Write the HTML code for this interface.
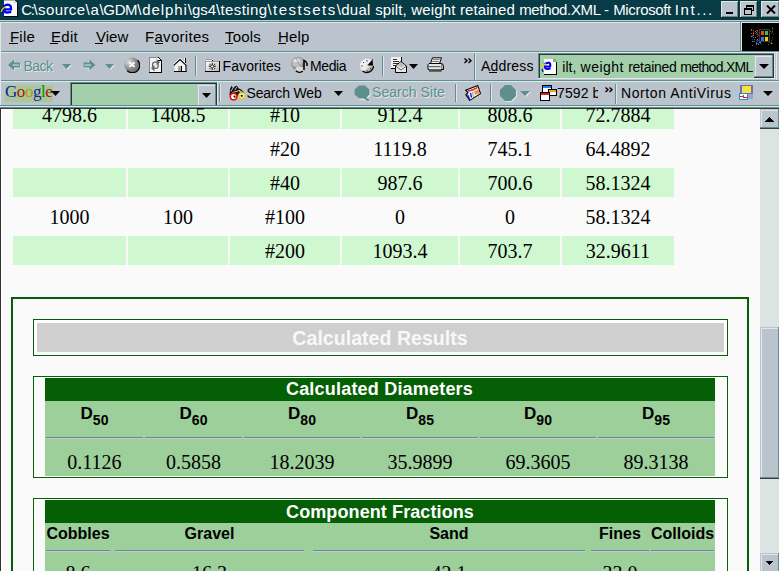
<!DOCTYPE html>
<html><head><meta charset="utf-8"><style>
html,body{margin:0;padding:0;}
body{width:779px;height:571px;overflow:hidden;position:relative;background:#fafafa;}
body>div,body>svg{position:absolute;}
</style></head><body>
<div style="left:0px;top:0px;width:779px;height:109px;background:#bbc4cc;"></div>
<div style="left:0px;top:0px;width:779px;height:20px;background:#073b45;"></div>
<div style="left:0px;top:20px;width:779px;height:1px;background:#c3cbd3;"></div>
<div style="left:0px;top:21px;width:779px;height:1px;background:#5f8f8f;"></div>
<div style="left:0px;top:22px;width:779px;height:1px;background:#dfe8e8;"></div>
<div style="left:0px;top:51px;width:779px;height:1px;background:#5f8f8f;"></div>
<div style="left:0px;top:52px;width:779px;height:1px;background:#dfe8e8;"></div>
<div style="left:0px;top:80px;width:779px;height:1px;background:#5f8f8f;"></div>
<div style="left:0px;top:81px;width:779px;height:1px;background:#dfe8e8;"></div>
<div style="left:0px;top:105px;width:779px;height:1px;background:#5f8f8f;"></div>
<div style="left:0px;top:106px;width:779px;height:1px;background:#dfe8e8;"></div>
<div style="left:0px;top:107px;width:779px;height:1px;background:#5f8f8f;"></div>
<div style="left:0px;top:108px;width:779px;height:1px;background:#3a3f40;"></div>
<div style="left:0px;top:22px;width:1px;height:83px;background:#dfe8e8;"></div>
<div style="left:0px;top:109px;width:760px;height:462px;background:#fafafa;"></div>
<div style="left:0px;top:109px;width:1px;height:462px;background:#333;"></div>
<div style="left:1px;top:109px;width:1px;height:462px;background:#fff;"></div>
<div style="left:13px;top:109px;width:113px;height:20px;background:#d0f8d0;"></div>
<div style="left:128px;top:109px;width:100px;height:20px;background:#d0f8d0;"></div>
<div style="left:230px;top:109px;width:110px;height:20px;background:#d0f8d0;"></div>
<div style="left:342px;top:109px;width:116px;height:20px;background:#d0f8d0;"></div>
<div style="left:460px;top:109px;width:100px;height:20px;background:#d0f8d0;"></div>
<div style="left:562px;top:109px;width:112px;height:20px;background:#d0f8d0;"></div>
<div style="left:13px;top:168px;width:113px;height:29px;background:#d0f8d0;"></div>
<div style="left:128px;top:168px;width:100px;height:29px;background:#d0f8d0;"></div>
<div style="left:230px;top:168px;width:110px;height:29px;background:#d0f8d0;"></div>
<div style="left:342px;top:168px;width:116px;height:29px;background:#d0f8d0;"></div>
<div style="left:460px;top:168px;width:100px;height:29px;background:#d0f8d0;"></div>
<div style="left:562px;top:168px;width:112px;height:29px;background:#d0f8d0;"></div>
<div style="left:13px;top:236px;width:113px;height:29px;background:#d0f8d0;"></div>
<div style="left:128px;top:236px;width:100px;height:29px;background:#d0f8d0;"></div>
<div style="left:230px;top:236px;width:110px;height:29px;background:#d0f8d0;"></div>
<div style="left:342px;top:236px;width:116px;height:29px;background:#d0f8d0;"></div>
<div style="left:460px;top:236px;width:100px;height:29px;background:#d0f8d0;"></div>
<div style="left:562px;top:236px;width:112px;height:29px;background:#d0f8d0;"></div>
<div style="left:-130.5px;width:400px;text-align:center;top:105.25px;font:normal 20px/20px 'Liberation Serif',serif;color:#000;letter-spacing:0px;white-space:nowrap;">4798.6</div>
<div style="left:-22.0px;width:400px;text-align:center;top:105.25px;font:normal 20px/20px 'Liberation Serif',serif;color:#000;letter-spacing:0px;white-space:nowrap;">1408.5</div>
<div style="left:85.0px;width:400px;text-align:center;top:105.25px;font:normal 20px/20px 'Liberation Serif',serif;color:#000;letter-spacing:0px;white-space:nowrap;">#10</div>
<div style="left:200.0px;width:400px;text-align:center;top:105.25px;font:normal 20px/20px 'Liberation Serif',serif;color:#000;letter-spacing:0px;white-space:nowrap;">912.4</div>
<div style="left:310.0px;width:400px;text-align:center;top:105.25px;font:normal 20px/20px 'Liberation Serif',serif;color:#000;letter-spacing:0px;white-space:nowrap;">808.6</div>
<div style="left:418.0px;width:400px;text-align:center;top:105.25px;font:normal 20px/20px 'Liberation Serif',serif;color:#000;letter-spacing:0px;white-space:nowrap;">72.7884</div>
<div style="left:85.0px;width:400px;text-align:center;top:139.25px;font:normal 20px/20px 'Liberation Serif',serif;color:#000;letter-spacing:0px;white-space:nowrap;">#20</div>
<div style="left:200.0px;width:400px;text-align:center;top:139.25px;font:normal 20px/20px 'Liberation Serif',serif;color:#000;letter-spacing:0px;white-space:nowrap;">1119.8</div>
<div style="left:310.0px;width:400px;text-align:center;top:139.25px;font:normal 20px/20px 'Liberation Serif',serif;color:#000;letter-spacing:0px;white-space:nowrap;">745.1</div>
<div style="left:418.0px;width:400px;text-align:center;top:139.25px;font:normal 20px/20px 'Liberation Serif',serif;color:#000;letter-spacing:0px;white-space:nowrap;">64.4892</div>
<div style="left:85.0px;width:400px;text-align:center;top:173.25px;font:normal 20px/20px 'Liberation Serif',serif;color:#000;letter-spacing:0px;white-space:nowrap;">#40</div>
<div style="left:200.0px;width:400px;text-align:center;top:173.25px;font:normal 20px/20px 'Liberation Serif',serif;color:#000;letter-spacing:0px;white-space:nowrap;">987.6</div>
<div style="left:310.0px;width:400px;text-align:center;top:173.25px;font:normal 20px/20px 'Liberation Serif',serif;color:#000;letter-spacing:0px;white-space:nowrap;">700.6</div>
<div style="left:418.0px;width:400px;text-align:center;top:173.25px;font:normal 20px/20px 'Liberation Serif',serif;color:#000;letter-spacing:0px;white-space:nowrap;">58.1324</div>
<div style="left:-130.5px;width:400px;text-align:center;top:207.25px;font:normal 20px/20px 'Liberation Serif',serif;color:#000;letter-spacing:0px;white-space:nowrap;">1000</div>
<div style="left:-22.0px;width:400px;text-align:center;top:207.25px;font:normal 20px/20px 'Liberation Serif',serif;color:#000;letter-spacing:0px;white-space:nowrap;">100</div>
<div style="left:85.0px;width:400px;text-align:center;top:207.25px;font:normal 20px/20px 'Liberation Serif',serif;color:#000;letter-spacing:0px;white-space:nowrap;">#100</div>
<div style="left:200.0px;width:400px;text-align:center;top:207.25px;font:normal 20px/20px 'Liberation Serif',serif;color:#000;letter-spacing:0px;white-space:nowrap;">0</div>
<div style="left:310.0px;width:400px;text-align:center;top:207.25px;font:normal 20px/20px 'Liberation Serif',serif;color:#000;letter-spacing:0px;white-space:nowrap;">0</div>
<div style="left:418.0px;width:400px;text-align:center;top:207.25px;font:normal 20px/20px 'Liberation Serif',serif;color:#000;letter-spacing:0px;white-space:nowrap;">58.1324</div>
<div style="left:85.0px;width:400px;text-align:center;top:241.25px;font:normal 20px/20px 'Liberation Serif',serif;color:#000;letter-spacing:0px;white-space:nowrap;">#200</div>
<div style="left:200.0px;width:400px;text-align:center;top:241.25px;font:normal 20px/20px 'Liberation Serif',serif;color:#000;letter-spacing:0px;white-space:nowrap;">1093.4</div>
<div style="left:310.0px;width:400px;text-align:center;top:241.25px;font:normal 20px/20px 'Liberation Serif',serif;color:#000;letter-spacing:0px;white-space:nowrap;">703.7</div>
<div style="left:418.0px;width:400px;text-align:center;top:241.25px;font:normal 20px/20px 'Liberation Serif',serif;color:#000;letter-spacing:0px;white-space:nowrap;">32.9611</div>
<div style="left:11px;top:297px;width:738px;height:2px;background:#056005;"></div>
<div style="left:11px;top:297px;width:2px;height:274px;background:#056005;"></div>
<div style="left:747px;top:297px;width:2px;height:274px;background:#056005;"></div>
<div style="left:33px;top:319px;width:695px;height:1px;background:#056005;"></div>
<div style="left:33px;top:355px;width:695px;height:1px;background:#056005;"></div>
<div style="left:33px;top:319px;width:1px;height:37px;background:#056005;"></div>
<div style="left:727px;top:319px;width:1px;height:37px;background:#056005;"></div>
<div style="left:34px;top:320px;width:693px;height:35px;background:#fff;"></div>
<div style="left:37px;top:323px;width:687px;height:29px;background:#cfcfcf;"></div>
<div style="left:180.0px;width:400px;text-align:center;top:329.41px;font:bold 19.6px/19.6px 'Liberation Sans',sans-serif;color:#f8f8f8;letter-spacing:0px;white-space:nowrap;">Calculated Results</div>
<div style="left:33px;top:376px;width:695px;height:1px;background:#056005;"></div>
<div style="left:33px;top:477px;width:695px;height:1px;background:#056005;"></div>
<div style="left:33px;top:376px;width:1px;height:102px;background:#056005;"></div>
<div style="left:727px;top:376px;width:1px;height:102px;background:#056005;"></div>
<div style="left:34px;top:377px;width:693px;height:100px;background:#fff;"></div>
<div style="left:35px;top:378px;width:691px;height:98px;background:#fafafa;"></div>
<div style="left:45px;top:378px;width:670px;height:23px;background:#056005;"></div>
<div style="left:45px;top:401px;width:670px;height:75px;background:#9ccf9a;"></div>
<div style="left:179.5px;width:400px;text-align:center;top:380.36px;font:bold 18px/18px 'Liberation Sans',sans-serif;color:#fff;letter-spacing:0.2px;white-space:nowrap;">Calculated Diameters</div>
<div style="left:46px;top:437px;width:97px;height:1px;background:#5f8f8f;"></div>
<div style="left:46px;top:438px;width:97px;height:1px;background:#c8c8d8;"></div>
<div style="left:34.5px;width:120px;text-align:center;top:404.61px;font:bold 17px/17px 'Liberation Sans',sans-serif;color:#000;white-space:nowrap">D<span style="font-size:14px;position:relative;top:6px">50</span></div>
<div style="left:-105.5px;width:400px;text-align:center;top:452.25px;font:normal 20px/20px 'Liberation Serif',serif;color:#000;letter-spacing:0px;white-space:nowrap;">0.1126</div>
<div style="left:145px;top:437px;width:97px;height:1px;background:#5f8f8f;"></div>
<div style="left:145px;top:438px;width:97px;height:1px;background:#c8c8d8;"></div>
<div style="left:133.5px;width:120px;text-align:center;top:404.61px;font:bold 17px/17px 'Liberation Sans',sans-serif;color:#000;white-space:nowrap">D<span style="font-size:14px;position:relative;top:6px">60</span></div>
<div style="left:-6.5px;width:400px;text-align:center;top:452.25px;font:normal 20px/20px 'Liberation Serif',serif;color:#000;letter-spacing:0px;white-space:nowrap;">0.5858</div>
<div style="left:244px;top:437px;width:116px;height:1px;background:#5f8f8f;"></div>
<div style="left:244px;top:438px;width:116px;height:1px;background:#c8c8d8;"></div>
<div style="left:242.0px;width:120px;text-align:center;top:404.61px;font:bold 17px/17px 'Liberation Sans',sans-serif;color:#000;white-space:nowrap">D<span style="font-size:14px;position:relative;top:6px">80</span></div>
<div style="left:102.0px;width:400px;text-align:center;top:452.25px;font:normal 20px/20px 'Liberation Serif',serif;color:#000;letter-spacing:0px;white-space:nowrap;">18.2039</div>
<div style="left:362px;top:437px;width:116px;height:1px;background:#5f8f8f;"></div>
<div style="left:362px;top:438px;width:116px;height:1px;background:#c8c8d8;"></div>
<div style="left:360.0px;width:120px;text-align:center;top:404.61px;font:bold 17px/17px 'Liberation Sans',sans-serif;color:#000;white-space:nowrap">D<span style="font-size:14px;position:relative;top:6px">85</span></div>
<div style="left:220.0px;width:400px;text-align:center;top:452.25px;font:normal 20px/20px 'Liberation Serif',serif;color:#000;letter-spacing:0px;white-space:nowrap;">35.9899</div>
<div style="left:480px;top:437px;width:116px;height:1px;background:#5f8f8f;"></div>
<div style="left:480px;top:438px;width:116px;height:1px;background:#c8c8d8;"></div>
<div style="left:478.0px;width:120px;text-align:center;top:404.61px;font:bold 17px/17px 'Liberation Sans',sans-serif;color:#000;white-space:nowrap">D<span style="font-size:14px;position:relative;top:6px">90</span></div>
<div style="left:338.0px;width:400px;text-align:center;top:452.25px;font:normal 20px/20px 'Liberation Serif',serif;color:#000;letter-spacing:0px;white-space:nowrap;">69.3605</div>
<div style="left:598px;top:437px;width:116px;height:1px;background:#5f8f8f;"></div>
<div style="left:598px;top:438px;width:116px;height:1px;background:#c8c8d8;"></div>
<div style="left:596.0px;width:120px;text-align:center;top:404.61px;font:bold 17px/17px 'Liberation Sans',sans-serif;color:#000;white-space:nowrap">D<span style="font-size:14px;position:relative;top:6px">95</span></div>
<div style="left:456.0px;width:400px;text-align:center;top:452.25px;font:normal 20px/20px 'Liberation Serif',serif;color:#000;letter-spacing:0px;white-space:nowrap;">89.3138</div>
<div style="left:33px;top:498px;width:695px;height:1px;background:#056005;"></div>
<div style="left:33px;top:498px;width:1px;height:73px;background:#056005;"></div>
<div style="left:727px;top:498px;width:1px;height:73px;background:#056005;"></div>
<div style="left:34px;top:499px;width:693px;height:72px;background:#fff;"></div>
<div style="left:35px;top:500px;width:691px;height:71px;background:#fafafa;"></div>
<div style="left:45px;top:500px;width:670px;height:23px;background:#056005;"></div>
<div style="left:45px;top:523px;width:670px;height:48px;background:#9ccf9a;"></div>
<div style="left:180.0px;width:400px;text-align:center;top:502.76px;font:bold 18px/18px 'Liberation Sans',sans-serif;color:#fff;letter-spacing:0.1px;white-space:nowrap;">Component Fractions</div>
<div style="left:46px;top:550px;width:64px;height:1px;background:#5f8f8f;"></div>
<div style="left:46px;top:551px;width:64px;height:1px;background:#c8c8d8;"></div>
<div style="left:-122.0px;width:400px;text-align:center;top:526.46px;font:bold 16px/16px 'Liberation Sans',sans-serif;color:#000;letter-spacing:0px;white-space:nowrap;">Cobbles</div>
<div style="left:-122.0px;width:400px;text-align:center;top:563.25px;font:normal 20px/20px 'Liberation Serif',serif;color:#000;letter-spacing:0px;white-space:nowrap;">8.6</div>
<div style="left:115px;top:550px;width:189px;height:1px;background:#5f8f8f;"></div>
<div style="left:115px;top:551px;width:189px;height:1px;background:#c8c8d8;"></div>
<div style="left:9.5px;width:400px;text-align:center;top:526.46px;font:bold 16px/16px 'Liberation Sans',sans-serif;color:#000;letter-spacing:0px;white-space:nowrap;">Gravel</div>
<div style="left:9.5px;width:400px;text-align:center;top:563.25px;font:normal 20px/20px 'Liberation Serif',serif;color:#000;letter-spacing:0px;white-space:nowrap;">16.3</div>
<div style="left:313px;top:550px;width:272px;height:1px;background:#5f8f8f;"></div>
<div style="left:313px;top:551px;width:272px;height:1px;background:#c8c8d8;"></div>
<div style="left:249.0px;width:400px;text-align:center;top:526.46px;font:bold 16px/16px 'Liberation Sans',sans-serif;color:#000;letter-spacing:0px;white-space:nowrap;">Sand</div>
<div style="left:249.0px;width:400px;text-align:center;top:563.25px;font:normal 20px/20px 'Liberation Serif',serif;color:#000;letter-spacing:0px;white-space:nowrap;">42.1</div>
<div style="left:591px;top:550px;width:58px;height:1px;background:#5f8f8f;"></div>
<div style="left:591px;top:551px;width:58px;height:1px;background:#c8c8d8;"></div>
<div style="left:420.0px;width:400px;text-align:center;top:526.46px;font:bold 16px/16px 'Liberation Sans',sans-serif;color:#000;letter-spacing:0px;white-space:nowrap;">Fines</div>
<div style="left:420.0px;width:400px;text-align:center;top:563.25px;font:normal 20px/20px 'Liberation Serif',serif;color:#000;letter-spacing:0px;white-space:nowrap;">33.0</div>
<div style="left:651px;top:550px;width:63px;height:1px;background:#5f8f8f;"></div>
<div style="left:651px;top:551px;width:63px;height:1px;background:#c8c8d8;"></div>
<div style="left:482.5px;width:400px;text-align:center;top:526.46px;font:bold 16px/16px 'Liberation Sans',sans-serif;color:#000;letter-spacing:0px;white-space:nowrap;">Colloids</div>
<div style="left:760px;top:109px;width:19px;height:462px;background:#dce3e3;"></div>
<div style="left:760px;top:109px;width:20px;height:20px;background:#bbc4cc;"></div>
<div style="left:761px;top:110px;width:18px;height:1px;background:#dfe8e8;"></div>
<div style="left:761px;top:110px;width:1px;height:18px;background:#dfe8e8;"></div>
<div style="left:760px;top:127px;width:20px;height:1px;background:#5f8f8f;"></div>
<div style="left:778px;top:109px;width:1px;height:19px;background:#5f8f8f;"></div>
<div style="left:760px;top:128px;width:20px;height:1px;background:#3a3f40;"></div>
<div style="left:779px;top:109px;width:1px;height:20px;background:#3a3f40;"></div>
<div style="left:760px;top:327px;width:20px;height:152px;background:#bbc4cc;"></div>
<div style="left:761px;top:328px;width:18px;height:1px;background:#dfe8e8;"></div>
<div style="left:761px;top:328px;width:1px;height:150px;background:#dfe8e8;"></div>
<div style="left:760px;top:477px;width:20px;height:1px;background:#5f8f8f;"></div>
<div style="left:778px;top:327px;width:1px;height:151px;background:#5f8f8f;"></div>
<div style="left:760px;top:478px;width:20px;height:1px;background:#3a3f40;"></div>
<div style="left:779px;top:327px;width:1px;height:152px;background:#3a3f40;"></div>
<div style="left:760px;top:553px;width:20px;height:20px;background:#bbc4cc;"></div>
<div style="left:761px;top:554px;width:18px;height:1px;background:#dfe8e8;"></div>
<div style="left:761px;top:554px;width:1px;height:18px;background:#dfe8e8;"></div>
<div style="left:760px;top:571px;width:20px;height:1px;background:#5f8f8f;"></div>
<div style="left:778px;top:553px;width:1px;height:19px;background:#5f8f8f;"></div>
<div style="left:760px;top:572px;width:20px;height:1px;background:#3a3f40;"></div>
<div style="left:779px;top:553px;width:1px;height:20px;background:#3a3f40;"></div>
<svg style="left:764px;top:116px" width="11" height="6" viewBox="0 0 11 6" shape-rendering="crispEdges"><polygon points="0.5,5.5 5,1 9.5,5.5" fill="#000"/></svg>
<svg style="left:764px;top:560px" width="11" height="6" viewBox="0 0 11 6" shape-rendering="crispEdges"><polygon points="0.5,0.5 5,5 9.5,0.5" fill="#000"/></svg>
<svg style="left:0px;top:0px" width="20" height="19" viewBox="0 0 20 19" shape-rendering="crispEdges"><rect x="4" y="0" width="13" height="16" fill="#f8f8f8"/><rect x="4" y="0" width="10" height="1" fill="#a8b0b0"/><polygon points="14,0 18,0 18,4" fill="#073b45"/><polygon points="14,0 17,3 14,3" fill="#d0d0d0"/><rect x="17" y="3" width="1" height="14" fill="#000"/><rect x="4" y="16" width="14" height="1" fill="#000"/></svg>
<svg style="left:0px;top:1px" width="14" height="15" viewBox="0 0 14 15"><path d="M4.2,8.3 H11 Q11.3,3.6 7.6,3.6 Q3.6,3.8 3.9,8.5 Q4.3,12 8.2,11.4 L11.2,10.8" fill="none" stroke="#0000f0" stroke-width="2.3"/><path d="M1.3,11 Q2,7.2 6.2,5.6" fill="none" stroke="#e0d000" stroke-width="1.3"/><path d="M2.6,10.5 L3.2,14.2" stroke="#0000f0" stroke-width="1.3"/></svg>
<div style="left:21.2px;top:2.30px;font:normal 15px/15px 'Liberation Sans',sans-serif;color:#fff;letter-spacing:-1.35px;white-space:nowrap;">C:</div>
<div style="left:33.5px;top:2.30px;font:normal 15px/15px 'Liberation Sans',sans-serif;color:#fff;letter-spacing:0.385px;white-space:nowrap;">\source</div>
<div style="left:85.4px;top:2.30px;font:normal 15px/15px 'Liberation Sans',sans-serif;color:#fff;letter-spacing:0.842px;white-space:nowrap;">\a</div>
<div style="left:99.60000000000001px;top:2.30px;font:normal 15px/15px 'Liberation Sans',sans-serif;color:#fff;letter-spacing:-0.393px;white-space:nowrap;">\GDM</div>
<div style="left:137.2px;top:2.30px;font:normal 15px/15px 'Liberation Sans',sans-serif;color:#fff;letter-spacing:0.914px;white-space:nowrap;">\delphi</div>
<div style="left:187.79999999999998px;top:2.30px;font:normal 15px/15px 'Liberation Sans',sans-serif;color:#fff;letter-spacing:-0.04px;white-space:nowrap;">\gs4</div>
<div style="left:216.0px;top:2.30px;font:normal 15px/15px 'Liberation Sans',sans-serif;color:#fff;letter-spacing:0.378px;white-space:nowrap;">\testing</div>
<div style="left:267.4px;top:2.30px;font:normal 15px/15px 'Liberation Sans',sans-serif;color:#fff;letter-spacing:1.492px;white-space:nowrap;">\testsets</div>
<div style="left:336.7px;top:2.30px;font:normal 15px/15px 'Liberation Sans',sans-serif;color:#fff;letter-spacing:0.299px;white-space:nowrap;">\dual&nbsp;</div>
<div style="left:375.2px;top:2.30px;font:normal 15px/15px 'Liberation Sans',sans-serif;color:#fff;letter-spacing:0.141px;white-space:nowrap;">spilt,&nbsp;</div>
<div style="left:411.2px;top:2.30px;font:normal 15px/15px 'Liberation Sans',sans-serif;color:#fff;letter-spacing:0.167px;white-space:nowrap;">weight&nbsp;</div>
<div style="left:459.9px;top:2.30px;font:normal 15px/15px 'Liberation Sans',sans-serif;color:#fff;letter-spacing:0.101px;white-space:nowrap;">retained&nbsp;</div>
<div style="left:519.2px;top:2.30px;font:normal 15px/15px 'Liberation Sans',sans-serif;color:#fff;letter-spacing:-0.352px;white-space:nowrap;">method.XML&nbsp;</div>
<div style="left:604.0px;top:2.30px;font:normal 15px/15px 'Liberation Sans',sans-serif;color:#fff;letter-spacing:0.014px;white-space:nowrap;">-&nbsp;</div>
<div style="left:613.2px;top:2.30px;font:normal 15px/15px 'Liberation Sans',sans-serif;color:#fff;letter-spacing:-0.343px;white-space:nowrap;">Microsoft&nbsp;</div>
<div style="left:674.8000000000001px;top:2.30px;font:normal 15px/15px 'Liberation Sans',sans-serif;color:#fff;letter-spacing:1.649px;white-space:nowrap;">Int...</div>
<div style="left:721px;top:1px;width:18px;height:17px;background:#bbc4cc;"></div>
<div style="left:721px;top:1px;width:17px;height:1px;background:#dfe8e8;"></div>
<div style="left:721px;top:1px;width:1px;height:16px;background:#dfe8e8;"></div>
<div style="left:722px;top:16px;width:16px;height:1px;background:#5f8f8f;"></div>
<div style="left:737px;top:2px;width:1px;height:15px;background:#5f8f8f;"></div>
<div style="left:721px;top:17px;width:18px;height:1px;background:#1a2a2a;"></div>
<div style="left:738px;top:1px;width:1px;height:17px;background:#1a2a2a;"></div>
<div style="left:740px;top:1px;width:18px;height:17px;background:#bbc4cc;"></div>
<div style="left:740px;top:1px;width:17px;height:1px;background:#dfe8e8;"></div>
<div style="left:740px;top:1px;width:1px;height:16px;background:#dfe8e8;"></div>
<div style="left:741px;top:16px;width:16px;height:1px;background:#5f8f8f;"></div>
<div style="left:756px;top:2px;width:1px;height:15px;background:#5f8f8f;"></div>
<div style="left:740px;top:17px;width:18px;height:1px;background:#1a2a2a;"></div>
<div style="left:757px;top:1px;width:1px;height:17px;background:#1a2a2a;"></div>
<div style="left:761px;top:1px;width:19px;height:17px;background:#bbc4cc;"></div>
<div style="left:761px;top:1px;width:18px;height:1px;background:#dfe8e8;"></div>
<div style="left:761px;top:1px;width:1px;height:16px;background:#dfe8e8;"></div>
<div style="left:762px;top:16px;width:17px;height:1px;background:#5f8f8f;"></div>
<div style="left:778px;top:2px;width:1px;height:15px;background:#5f8f8f;"></div>
<div style="left:761px;top:17px;width:19px;height:1px;background:#1a2a2a;"></div>
<div style="left:779px;top:1px;width:1px;height:17px;background:#1a2a2a;"></div>
<div style="left:726px;top:12px;width:7px;height:2px;background:#000;"></div>
<svg style="left:744px;top:5px" width="11" height="10" viewBox="0 0 11 10" shape-rendering="crispEdges"><rect x="2.5" y="0.5" width="7" height="5" fill="none" stroke="#000"/><rect x="2" y="0" width="8" height="2" fill="#000"/><rect x="0" y="3" width="8" height="7" fill="#bbc4cc"/><rect x="0.5" y="3.5" width="7" height="5.5" fill="none" stroke="#000"/><rect x="0" y="3" width="8" height="2" fill="#000"/></svg>
<svg style="left:766px;top:5px" width="10" height="9" viewBox="0 0 10 9"><path d="M1,0.5 L9,8.5 M9,0.5 L1,8.5" stroke="#000" stroke-width="2"/></svg>
<div style="left:10px;top:29.30px;font:normal 15px/15px 'Liberation Sans',sans-serif;color:#000;letter-spacing:0.2px;white-space:nowrap;">File</div>
<div style="left:51px;top:29.30px;font:normal 15px/15px 'Liberation Sans',sans-serif;color:#000;letter-spacing:0.3px;white-space:nowrap;">Edit</div>
<div style="left:96px;top:29.30px;font:normal 15px/15px 'Liberation Sans',sans-serif;color:#000;letter-spacing:0px;white-space:nowrap;">View</div>
<div style="left:145px;top:29.30px;font:normal 15px/15px 'Liberation Sans',sans-serif;color:#000;letter-spacing:0.3px;white-space:nowrap;">Favorites</div>
<div style="left:225px;top:29.30px;font:normal 15px/15px 'Liberation Sans',sans-serif;color:#000;letter-spacing:0.2px;white-space:nowrap;">Tools</div>
<div style="left:278px;top:29.30px;font:normal 15px/15px 'Liberation Sans',sans-serif;color:#000;letter-spacing:0.2px;white-space:nowrap;">Help</div>
<div style="left:9px;top:43px;width:9px;height:1px;background:#000;"></div>
<div style="left:50px;top:43px;width:8px;height:1px;background:#000;"></div>
<div style="left:95px;top:43px;width:8px;height:1px;background:#000;"></div>
<div style="left:155px;top:43px;width:8px;height:1px;background:#000;"></div>
<div style="left:225px;top:43px;width:8px;height:1px;background:#000;"></div>
<div style="left:278px;top:43px;width:8px;height:1px;background:#000;"></div>
<div style="left:740px;top:22px;width:1px;height:29px;background:#5f8f8f;"></div>
<div style="left:741px;top:22px;width:1px;height:29px;background:#dfe8e8;"></div>
<div style="left:742px;top:23px;width:37px;height:28px;background:#000;"></div>
<svg style="left:742px;top:23px" width="37" height="28" viewBox="0 0 37 28" shape-rendering="crispEdges"><rect x="11" y="10" width="1" height="1" fill="#c04040" opacity="0.86"/><rect x="13" y="10" width="1" height="1" fill="#a05030" opacity="0.41"/><rect x="17" y="8" width="1" height="1" fill="#f08060" opacity="0.50"/><rect x="15" y="10" width="1" height="1" fill="#a05030" opacity="0.64"/><rect x="15" y="7" width="1" height="1" fill="#f08060" opacity="0.83"/><rect x="14" y="11" width="1" height="1" fill="#e05050" opacity="0.48"/><rect x="18" y="6" width="1" height="1" fill="#e05050" opacity="0.81"/><rect x="11" y="10" width="1" height="1" fill="#f0a0a0" opacity="0.76"/><rect x="17" y="9" width="1" height="1" fill="#a05030" opacity="0.62"/><rect x="17" y="12" width="1" height="1" fill="#e05050" opacity="0.42"/><rect x="13" y="8" width="1" height="1" fill="#f0a0a0" opacity="0.79"/><rect x="17" y="9" width="1" height="1" fill="#f0a0a0" opacity="0.69"/><rect x="14" y="9" width="1" height="1" fill="#f08060" opacity="0.85"/><rect x="15" y="13" width="1" height="1" fill="#c04040" opacity="0.90"/><rect x="15" y="7" width="1" height="1" fill="#c04040" opacity="0.88"/><rect x="17" y="10" width="1" height="1" fill="#f08060" opacity="0.72"/><rect x="18" y="8" width="1" height="1" fill="#e05050" opacity="0.43"/><rect x="17" y="13" width="1" height="1" fill="#e05050" opacity="0.57"/><rect x="10" y="12" width="1" height="1" fill="#e05050" opacity="0.55"/><rect x="16" y="12" width="1" height="1" fill="#e05050" opacity="0.70"/><rect x="16" y="9" width="1" height="1" fill="#a05030" opacity="0.57"/><rect x="17" y="13" width="1" height="1" fill="#a05030" opacity="0.52"/><rect x="9" y="6" width="1" height="1" fill="#e05050" opacity="0.70"/><rect x="9" y="7" width="1" height="1" fill="#f0a0a0" opacity="0.55"/><rect x="11" y="11" width="1" height="1" fill="#c04040" opacity="0.56"/><rect x="18" y="12" width="1" height="1" fill="#f0a0a0" opacity="0.59"/><rect x="17" y="9" width="1" height="1" fill="#a05030" opacity="0.74"/><rect x="10" y="13" width="1" height="1" fill="#a05030" opacity="0.54"/><rect x="15" y="11" width="1" height="1" fill="#c04040" opacity="0.62"/><rect x="11" y="8" width="1" height="1" fill="#c04040" opacity="0.41"/><rect x="13" y="10" width="1" height="1" fill="#e05050" opacity="0.59"/><rect x="14" y="7" width="1" height="1" fill="#c04040" opacity="0.63"/><rect x="15" y="8" width="1" height="1" fill="#c04040" opacity="0.77"/><rect x="9" y="6" width="1" height="1" fill="#e05050" opacity="0.88"/><rect x="11" y="9" width="1" height="1" fill="#a05030" opacity="0.70"/><rect x="11" y="7" width="1" height="1" fill="#c04040" opacity="0.82"/><rect x="11" y="12" width="1" height="1" fill="#e05050" opacity="0.79"/><rect x="9" y="10" width="1" height="1" fill="#f08060" opacity="0.56"/><rect x="11" y="12" width="1" height="1" fill="#f08060" opacity="0.56"/><rect x="15" y="11" width="1" height="1" fill="#e05050" opacity="0.45"/><rect x="12" y="16" width="1" height="1" fill="#60a0f0" opacity="0.62"/><rect x="18" y="15" width="1" height="1" fill="#3050b0" opacity="0.77"/><rect x="11" y="18" width="1" height="1" fill="#3050b0" opacity="0.51"/><rect x="10" y="18" width="1" height="1" fill="#60a0f0" opacity="0.56"/><rect x="17" y="18" width="1" height="1" fill="#3050b0" opacity="0.57"/><rect x="17" y="14" width="1" height="1" fill="#a080c0" opacity="0.57"/><rect x="10" y="16" width="1" height="1" fill="#3050b0" opacity="0.63"/><rect x="15" y="16" width="1" height="1" fill="#a080c0" opacity="0.60"/><rect x="18" y="14" width="1" height="1" fill="#5080e0" opacity="0.64"/><rect x="17" y="19" width="1" height="1" fill="#a080c0" opacity="0.62"/><rect x="19" y="21" width="1" height="1" fill="#60a0f0" opacity="0.42"/><rect x="14" y="20" width="1" height="1" fill="#a080c0" opacity="0.88"/><rect x="14" y="21" width="1" height="1" fill="#5080e0" opacity="0.83"/><rect x="19" y="14" width="1" height="1" fill="#60a0f0" opacity="0.42"/><rect x="18" y="19" width="1" height="1" fill="#60a0f0" opacity="0.85"/><rect x="18" y="18" width="1" height="1" fill="#5080e0" opacity="0.64"/><rect x="10" y="18" width="1" height="1" fill="#60a0f0" opacity="0.73"/><rect x="14" y="17" width="1" height="1" fill="#a080c0" opacity="0.46"/><rect x="10" y="22" width="1" height="1" fill="#a080c0" opacity="0.64"/><rect x="17" y="16" width="1" height="1" fill="#60a0f0" opacity="0.46"/><rect x="18" y="14" width="1" height="1" fill="#60a0f0" opacity="0.80"/><rect x="18" y="20" width="1" height="1" fill="#5080e0" opacity="0.64"/><rect x="15" y="17" width="1" height="1" fill="#3050b0" opacity="0.52"/><rect x="15" y="18" width="1" height="1" fill="#5080e0" opacity="0.64"/><rect x="17" y="13" width="1" height="1" fill="#5080e0" opacity="0.79"/><rect x="9" y="13" width="1" height="1" fill="#80b0ff" opacity="0.89"/><rect x="18" y="14" width="1" height="1" fill="#a080c0" opacity="0.64"/><rect x="11" y="14" width="1" height="1" fill="#80b0ff" opacity="0.72"/><rect x="15" y="16" width="1" height="1" fill="#60a0f0" opacity="0.89"/><rect x="13" y="14" width="1" height="1" fill="#5080e0" opacity="0.76"/><rect x="13" y="14" width="1" height="1" fill="#60a0f0" opacity="0.42"/><rect x="14" y="19" width="1" height="1" fill="#a080c0" opacity="0.59"/><rect x="17" y="19" width="1" height="1" fill="#80b0ff" opacity="0.43"/><rect x="15" y="20" width="1" height="1" fill="#3050b0" opacity="0.61"/><rect x="16" y="17" width="1" height="1" fill="#60a0f0" opacity="0.51"/><rect x="12" y="18" width="1" height="1" fill="#80b0ff" opacity="0.51"/><rect x="10" y="13" width="1" height="1" fill="#3050b0" opacity="0.59"/><rect x="18" y="20" width="1" height="1" fill="#3050b0" opacity="0.46"/><rect x="16" y="21" width="1" height="1" fill="#a080c0" opacity="0.80"/><rect x="16" y="20" width="1" height="1" fill="#a080c0" opacity="0.67"/><rect x="30" y="16" width="1" height="1" fill="#a09030" opacity="0.37"/><rect x="30" y="5" width="1" height="1" fill="#408040" opacity="0.58"/><rect x="29" y="10" width="1" height="1" fill="#408040" opacity="0.47"/><rect x="30" y="4" width="1" height="1" fill="#408040" opacity="0.64"/><rect x="30" y="20" width="1" height="1" fill="#807020" opacity="0.70"/><rect x="25" y="17" width="1" height="1" fill="#60a040" opacity="0.35"/><rect x="29" y="20" width="1" height="1" fill="#408040" opacity="0.58"/><rect x="30" y="7" width="1" height="1" fill="#408040" opacity="0.42"/><rect x="26" y="8" width="1" height="1" fill="#a09030" opacity="0.43"/><rect x="29" y="20" width="1" height="1" fill="#a09030" opacity="0.78"/><rect x="27" y="8" width="1" height="1" fill="#a09030" opacity="0.72"/><rect x="31" y="11" width="1" height="1" fill="#a09030" opacity="0.38"/><rect x="27" y="19" width="1" height="1" fill="#60a040" opacity="0.35"/><rect x="29" y="20" width="1" height="1" fill="#a09030" opacity="0.59"/><rect x="30" y="6" width="1" height="1" fill="#60a040" opacity="0.37"/><rect x="28" y="20" width="1" height="1" fill="#807020" opacity="0.64"/><rect x="30" y="14" width="1" height="1" fill="#807020" opacity="0.74"/><rect x="27" y="9" width="1" height="1" fill="#a09030" opacity="0.40"/><rect x="28" y="8" width="1" height="1" fill="#a09030" opacity="0.69"/><rect x="26" y="21" width="1" height="1" fill="#a09030" opacity="0.65"/><rect x="26" y="14" width="1" height="1" fill="#408040" opacity="0.54"/><rect x="29" y="19" width="1" height="1" fill="#a09030" opacity="0.69"/><rect x="30" y="5" width="1" height="1" fill="#60a040" opacity="0.75"/><rect x="29" y="17" width="1" height="1" fill="#408040" opacity="0.78"/><rect x="30" y="8" width="1" height="1" fill="#60a040" opacity="0.69"/><rect x="26" y="15" width="1" height="1" fill="#408040" opacity="0.75"/><rect x="27" y="19" width="1" height="1" fill="#807020" opacity="0.39"/><rect x="26" y="18" width="1" height="1" fill="#408040" opacity="0.35"/><rect x="30" y="9" width="1" height="1" fill="#807020" opacity="0.53"/><rect x="29" y="10" width="1" height="1" fill="#408040" opacity="0.47"/><rect x="17.5" y="6.5" width="10" height="12" fill="#101010" stroke="#3a3a3a" stroke-width="1"/><rect x="19" y="8" width="3" height="4" fill="#f04020"/><rect x="23" y="8" width="3" height="4" fill="#40c040"/><rect x="19" y="14" width="3" height="4" fill="#3070f0"/><rect x="23" y="14" width="3" height="4" fill="#f0d000"/></svg>
<svg style="left:8px;top:60px" width="14" height="12" viewBox="0 0 14 12"><g ><path d="M1,5 L5.5,0.8 V3.2 H11.5 V6.8 H5.5 V9.2 Z" fill="none" stroke="#dfe8e8" stroke-width="1.2" transform="translate(0.8,0.8)"/><path d="M1,5 L5.5,0.8 V3.2 H11.5 V6.8 H5.5 V9.2 Z" fill="#5f8f8c" stroke="#5f8f8c" stroke-width="1.2"/><path d="M4.5,5 H11" stroke="#dfe8e8" stroke-width="1"/></g></svg>
<svg style="left:83px;top:60px" width="14" height="12" viewBox="0 0 14 12"><g transform="translate(12.5,0) scale(-1,1)"><path d="M1,5 L5.5,0.8 V3.2 H11.5 V6.8 H5.5 V9.2 Z" fill="none" stroke="#dfe8e8" stroke-width="1.2" transform="translate(0.8,0.8)"/><path d="M1,5 L5.5,0.8 V3.2 H11.5 V6.8 H5.5 V9.2 Z" fill="#5f8f8c" stroke="#5f8f8c" stroke-width="1.2"/><path d="M4.5,5 H11" stroke="#dfe8e8" stroke-width="1"/></g></svg>
<div style="left:24.5px;top:60.15px;font:normal 14px/14px 'Liberation Sans',sans-serif;color:#dfe8e8;letter-spacing:-0.5px;white-space:nowrap;">Back</div>
<div style="left:23.5px;top:59.15px;font:normal 14px/14px 'Liberation Sans',sans-serif;color:#5f8f8c;letter-spacing:-0.5px;white-space:nowrap;">Back</div>
<svg style="left:63px;top:65px" width="9" height="5" viewBox="0 0 9 5"><polygon points="0,0 9,0 4.5,5" fill="#dfe8e8"/></svg>
<svg style="left:106px;top:65px" width="9" height="5" viewBox="0 0 9 5"><polygon points="0,0 9,0 4.5,5" fill="#dfe8e8"/></svg>
<svg style="left:62px;top:64px" width="9" height="5" viewBox="0 0 9 5"><polygon points="0,0 9,0 4.5,5" fill="#5f8f8c"/></svg>
<svg style="left:105px;top:64px" width="9" height="5" viewBox="0 0 9 5"><polygon points="0,0 9,0 4.5,5" fill="#5f8f8c"/></svg>
<svg style="left:124px;top:57px" width="16" height="16" viewBox="0 0 16 16"><defs><radialGradient id="gs" cx="30%" cy="30%" r="80%"><stop offset="0" stop-color="#e0e0e0"/><stop offset="0.55" stop-color="#8c8c8c"/><stop offset="1" stop-color="#6a6a6a"/></radialGradient></defs><circle cx="8" cy="8" r="7.6" fill="url(#gs)"/><path d="M13.6,3.2 A7.3,7.3 0 0 1 3.2,13.6" fill="none" stroke="#000" stroke-width="1.3"/><path d="M5.4,5.4 L10.6,9.9 M10.6,5.4 L5.4,9.9" stroke="#fff" stroke-width="1.9"/></svg>
<svg style="left:149px;top:57px" width="14" height="16" viewBox="0 0 14 16" shape-rendering="crispEdges"><polygon points="0,0 9,0 13,4 13,16 0,16" fill="#000"/><polygon points="0,0 9,0 12,3 12,15 0,15" fill="#f4f4f4"/><rect x="0" y="0" width="9" height="1" fill="#888"/><rect x="0" y="0" width="1" height="15" fill="#888"/><polygon points="9,0 9,4 13,4" fill="#000"/><polygon points="9,1 9,3 11,3" fill="#fff"/></svg>
<svg style="left:149px;top:57px" width="14" height="16" viewBox="0 0 14 16"><path d="M3.6,10 V7.5 Q3.6,5.2 6,5.2 H8" stroke="#686868" stroke-width="1.3" fill="none"/><polygon points="7.5,2 11,5.2 7.5,8.4" fill="#686868"/><path d="M9.2,6.6 V9 Q9.2,11.3 6.8,11.3 H5" stroke="#686868" stroke-width="1.3" fill="none"/><polygon points="5.5,8.1 2,11.3 5.5,14.5" fill="#686868"/></svg>
<svg style="left:173px;top:57px" width="15" height="16" viewBox="0 0 15 16"><path d="M1.5,7.5 L7,2.2 L12.5,7.5 V14.5 H1.5 Z" fill="#f2f2f2"/><path d="M0.5,7.3 L7,1.3 L13.5,7.3" fill="none" stroke="#fff" stroke-width="1"/><path d="M0.8,8.3 L7,2.6 L13.2,8.3" fill="none" stroke="#000" stroke-width="1.1"/><rect x="11" y="1" width="2" height="4.5" fill="#eee"/><rect x="12" y="1" width="1" height="5" fill="#000"/><rect x="1" y="14" width="12.5" height="1" fill="#000"/><rect x="12.5" y="8" width="1" height="7" fill="#000"/><rect x="5" y="9" width="3" height="5" fill="#aaa"/><rect x="8" y="9" width="1" height="5" fill="#000"/></svg>
<div style="left:195px;top:56px;width:1px;height:20px;background:#5f8f8f;"></div>
<div style="left:196px;top:56px;width:1px;height:20px;background:#dfe8e8;"></div>
<svg style="left:205px;top:59px" width="16" height="14" viewBox="0 0 16 14" shape-rendering="crispEdges"><defs><linearGradient id="gf" x1="0" y1="0" x2="1" y2="1"><stop offset="0" stop-color="#fff"/><stop offset="1" stop-color="#b8b8b8"/></linearGradient></defs><rect x="1" y="0" width="7" height="2" fill="#f0f0f0"/><rect x="1" y="0" width="6" height="1" fill="#999"/><rect x="7" y="1" width="1" height="1" fill="#000"/><rect x="0" y="2" width="15" height="11" fill="#000"/><rect x="0" y="2" width="14" height="10" fill="#999"/><rect x="1" y="3" width="13" height="9" fill="url(#gf)"/></svg>
<svg style="left:205px;top:59px" width="16" height="14" viewBox="0 0 16 14"><path d="M7.3,3.8 V11 M3.8,7.4 H10.8" stroke="#333" stroke-width="1.1"/><circle cx="5" cy="5.2" r="0.7" fill="#333"/><circle cx="9.6" cy="5.2" r="0.7" fill="#333"/><circle cx="5" cy="9.6" r="0.7" fill="#333"/><circle cx="9.6" cy="9.6" r="0.7" fill="#333"/><circle cx="7.3" cy="7.4" r="1.5" fill="#fff" stroke="#333" stroke-width="1"/></svg>
<div style="left:222.5px;top:59.15px;font:normal 14px/14px 'Liberation Sans',sans-serif;color:#000;letter-spacing:0.1px;white-space:nowrap;">Favorites</div>
<svg style="left:291px;top:57px" width="18" height="17" viewBox="0 0 18 17"><defs><radialGradient id="gm" cx="35%" cy="30%" r="70%"><stop offset="0" stop-color="#f4f4f4"/><stop offset="0.7" stop-color="#b0b0b0"/><stop offset="1" stop-color="#777"/></radialGradient></defs><polygon points="4,1 9,0.5 13,3 13.5,9 9,12 3,12 0.5,8 0.8,4" fill="url(#gm)" stroke="#888" stroke-width="0.8"/><path d="M2,6 H8 M5,1.5 L9,9" stroke="#999" stroke-width="0.8"/><ellipse cx="8.5" cy="12.5" rx="4" ry="3.2" fill="#d8d8d8"/><path d="M4.8,13.8 Q8,16.8 11.8,14" fill="none" stroke="#000" stroke-width="1.4"/><path d="M13,13 V3.5 Q15,4 16,6.5 V9" fill="none" stroke="#000" stroke-width="1.5"/></svg>
<div style="left:310px;top:59.15px;font:normal 14px/14px 'Liberation Sans',sans-serif;color:#000;letter-spacing:-0.4px;white-space:nowrap;">Media</div>
<svg style="left:359px;top:57px" width="16" height="17" viewBox="0 0 16 17"><defs><linearGradient id="gh" x1="0" y1="0" x2="1" y2="1"><stop offset="0" stop-color="#fff"/><stop offset="0.55" stop-color="#e8e8e8"/><stop offset="1" stop-color="#505050"/></linearGradient></defs><circle cx="8" cy="8.8" r="7" fill="url(#gh)"/><path d="M14.5,9 A6.8,6.8 0 0 1 3.5,14" fill="none" stroke="#000" stroke-width="1.3"/><path d="M8,8.5 L13.5,1.5 L14,8.5 Z" fill="#000"/><path d="M7.8,8.3 L13.2,2" stroke="#fff" stroke-width="1.1" stroke-dasharray="1,0.6"/><path d="M8,3 V4.5 M2.2,9 H3.7 M8,13.2 V14.7 M4,5 L5,6 M12,12 L11,11" stroke="#333" stroke-width="1"/></svg>
<div style="left:382px;top:56px;width:1px;height:20px;background:#5f8f8f;"></div>
<div style="left:383px;top:56px;width:1px;height:20px;background:#dfe8e8;"></div>
<svg style="left:391px;top:57px" width="18" height="16" viewBox="0 0 18 16" shape-rendering="crispEdges"><rect x="0" y="0" width="11" height="12" fill="#000"/><rect x="0" y="0" width="10" height="11" fill="#f0f0f0"/><rect x="2" y="2" width="4" height="1" fill="#333"/><rect x="2" y="4" width="6" height="1" fill="#333"/><rect x="2" y="6" width="6" height="1" fill="#333"/><rect x="2" y="8" width="5" height="1" fill="#333"/></svg>
<svg style="left:395px;top:61px" width="13" height="12" viewBox="0 0 13 12"><path d="M0.5,5 L6,0.5 L11.5,5 V11.5 H0.5 Z" fill="#e8e8e8" stroke="#000" stroke-width="1"/><path d="M0.5,5 L6,9 L11.5,5" fill="none" stroke="#666" stroke-width="1"/><path d="M2,4 L6,1.5 L10,4 L6,6.5Z" fill="#bbb"/></svg>
<svg style="left:409px;top:64px" width="9" height="5" viewBox="0 0 9 5"><polygon points="0,0 9,0 4.5,5" fill="#000"/></svg>
<svg style="left:427px;top:57px" width="18" height="16" viewBox="0 0 18 16"><path d="M5.5,0.8 H14.5 L12.5,6.5 H3.5 Z" fill="#f8f8f8" stroke="#000" stroke-width="1"/><path d="M6,2.6 H12.6 M5.2,4.5 H11.8" stroke="#666" stroke-width="0.9"/><path d="M2,6.5 H14 Q16.5,6.5 16.5,9.5 V12.5 H1 V7.5 Z" fill="#e6e6e6" stroke="#000" stroke-width="1"/><rect x="1.5" y="9" width="12" height="1.2" fill="#666"/><path d="M14.5,7.5 V12 M16,8.5 V11.5" stroke="#333" stroke-width="1" stroke-dasharray="1,1"/><rect x="2" y="13" width="12.5" height="1.5" fill="#111"/><rect x="2" y="12.5" width="12" height="0.8" fill="#ccc"/></svg>
<svg style="left:464px;top:58px" width="9" height="6" viewBox="0 0 9 6"><path d="M0.5,0.5 L3,2.75 L0.5,5 M4.5,0.5 L7,2.75 L4.5,5" fill="none" stroke="#000" stroke-width="1.4"/></svg>
<div style="left:474px;top:53px;width:1px;height:27px;background:#5f8f8f;"></div>
<div style="left:475px;top:53px;width:1px;height:27px;background:#dfe8e8;"></div>
<div style="left:481px;top:59.15px;font:normal 14px/14px 'Liberation Sans',sans-serif;color:#000;letter-spacing:0.2px;white-space:nowrap;">Address</div>
<div style="left:489px;top:72px;width:8px;height:1px;background:#000;"></div>
<div style="left:538px;top:53px;width:237px;height:26px;background:#a3d0aa;"></div>
<div style="left:538px;top:53px;width:236px;height:1px;background:#5f8f8f;"></div>
<div style="left:538px;top:53px;width:1px;height:25px;background:#5f8f8f;"></div>
<div style="left:539px;top:54px;width:235px;height:1px;background:#333;"></div>
<div style="left:539px;top:54px;width:1px;height:24px;background:#333;"></div>
<div style="left:538px;top:78px;width:237px;height:1px;background:#dfe8e8;"></div>
<div style="left:774px;top:53px;width:1px;height:26px;background:#dfe8e8;"></div>
<svg style="left:541px;top:59px" width="17" height="17" viewBox="0 0 17 17" shape-rendering="crispEdges"><rect x="3" y="0" width="12" height="15" fill="#fafafa"/><rect x="12" y="0" width="3" height="3" fill="#999"/><rect x="15" y="3" width="1" height="13" fill="#000"/><rect x="3" y="15" width="13" height="1" fill="#000"/></svg>
<svg style="left:540px;top:60px" width="12" height="13" viewBox="0 0 12 13"><path d="M4,5 Q5.5,2.5 9,2.7 Q11,4 10,6.5 L5,6.5 Q5,9.5 7.5,9 L10.5,8.5" fill="none" stroke="#0000ee" stroke-width="2.1"/><path d="M1,8.5 Q2.5,4.5 6,4" fill="none" stroke="#e8d800" stroke-width="1.3"/><path d="M2,9 L3,12" stroke="#0000ee" stroke-width="1.2"/></svg>
<div style="left:562.2px;top:60.15px;font:normal 14px/14px 'Liberation Sans',sans-serif;color:#000;letter-spacing:0.102px;white-space:nowrap;">ilt,&nbsp;</div>
<div style="left:580.6px;top:60.15px;font:normal 14px/14px 'Liberation Sans',sans-serif;color:#000;letter-spacing:0.465px;white-space:nowrap;">weight&nbsp;</div>
<div style="left:628.2px;top:60.15px;font:normal 14px/14px 'Liberation Sans',sans-serif;color:#000;letter-spacing:-0.273px;white-space:nowrap;">retained&nbsp;</div>
<div style="left:680.2px;top:60.15px;font:normal 14px/14px 'Liberation Sans',sans-serif;color:#000;letter-spacing:-0.694px;white-space:nowrap;">method.XML</div>
<div style="left:754px;top:55px;width:20px;height:23px;background:#bbc4cc;"></div>
<div style="left:755px;top:56px;width:17px;height:1px;background:#dfe8e8;"></div>
<div style="left:755px;top:56px;width:1px;height:20px;background:#dfe8e8;"></div>
<div style="left:772px;top:55px;width:1px;height:22px;background:#5f8f8f;"></div>
<div style="left:755px;top:76px;width:18px;height:1px;background:#5f8f8f;"></div>
<div style="left:773px;top:54px;width:1px;height:24px;background:#333;"></div>
<div style="left:754px;top:77px;width:20px;height:1px;background:#333;"></div>
<svg style="left:759px;top:64px" width="10" height="5" viewBox="0 0 10 5"><polygon points="0,0 10,0 5.0,5" fill="#000"/></svg>
<div style="left:776px;top:53px;width:1px;height:27px;background:#dfe8e8;"></div>
<div style="left:5px;top:85px;width:48px;height:17px;background:#a9c89a;"></div>
<div style="left:5px;top:83.26px;font:normal 17px/17px 'Liberation Serif',serif;letter-spacing:-0.45px;white-space:nowrap"><span style="color:#1020a8">G</span><span style="color:#b01010">o</span><span style="color:#b09a10">o</span><span style="color:#1020a8">g</span><span style="color:#108a10">l</span><span style="color:#b01010">e</span></div>
<svg style="left:51px;top:91px" width="9" height="5" viewBox="0 0 9 5"><polygon points="0,0 9,0 4.5,5" fill="#000"/></svg>
<div style="left:70px;top:82px;width:148px;height:23px;background:#a3d0aa;"></div>
<div style="left:70px;top:82px;width:147px;height:1px;background:#5f8f8f;"></div>
<div style="left:70px;top:82px;width:1px;height:23px;background:#5f8f8f;"></div>
<div style="left:71px;top:83px;width:146px;height:1px;background:#333;"></div>
<div style="left:71px;top:83px;width:1px;height:22px;background:#333;"></div>
<div style="left:216px;top:83px;width:1px;height:22px;background:#333;"></div>
<div style="left:217px;top:82px;width:1px;height:23px;background:#dfe8e8;"></div>
<div style="left:197px;top:84px;width:19px;height:21px;background:#bbc4cc;"></div>
<div style="left:198px;top:85px;width:17px;height:1px;background:#dfe8e8;"></div>
<div style="left:198px;top:85px;width:1px;height:20px;background:#dfe8e8;"></div>
<div style="left:215px;top:84px;width:1px;height:21px;background:#5f8f8f;"></div>
<svg style="left:202px;top:93px" width="9" height="5" viewBox="0 0 9 5"><polygon points="0,0 9,0 4.5,5" fill="#000"/></svg>
<div style="left:219px;top:84px;width:1px;height:18px;background:#5f8f8f;"></div>
<div style="left:220px;top:84px;width:1px;height:18px;background:#dfe8e8;"></div>
<svg style="left:229px;top:85px" width="17" height="16" viewBox="0 0 17 16"><path d="M0.5,10 L1,4 L2.5,0.8 L4.2,3.5 L6,1.2 L8,0.8 L9.8,3.5 L12,4.2 L14.5,6.8 L15,9 L12,8.5 L9,10.5 L4,11 Z" fill="#111"/><path d="M1.8,6.5 L3.8,3.2 M5.8,5 L8,2 M3.5,7.5 L11.5,5.2 M10,6 L13.5,7" stroke="#e0e0e0" stroke-width="0.9"/><circle cx="4.6" cy="11.6" r="3.3" fill="#fff" stroke="#e80000" stroke-width="1.5"/><circle cx="5.6" cy="11.6" r="1.1" fill="#000"/><circle cx="12.7" cy="10.6" r="2.8" fill="#fff" stroke="#e8d800" stroke-width="1.4"/><circle cx="12.7" cy="10.8" r="1.1" fill="#000"/></svg>
<div style="left:246.5px;top:86.15px;font:normal 14px/14px 'Liberation Sans',sans-serif;color:#000;letter-spacing:-0.18px;white-space:nowrap;">Search Web</div>
<svg style="left:334px;top:91px" width="9" height="5" viewBox="0 0 9 5"><polygon points="0,0 9,0 4.5,5" fill="#000"/></svg>
<svg style="left:354px;top:85px" width="18" height="17" viewBox="0 0 18 17"><path d="M5,0.5 H11 L15.5,4.5 V9.5 L12,13 L16,16 L14,16.5 L9.5,14 H5 L0.5,9.5 V4.5 Z" fill="#dfe8e8" transform="translate(1,1)"/><path d="M5,0.5 H11 L15.5,4.5 V9.5 L12.5,12.5 L15.5,15.5 L14,16.5 L10,13.5 H5 L0.5,9.5 V4.5 Z" fill="#5f8f8a"/></svg>
<div style="left:373px;top:86.15px;font:normal 14px/14px 'Liberation Sans',sans-serif;color:#dfe8e8;letter-spacing:0.05px;white-space:nowrap;">Search Site</div>
<div style="left:372px;top:85.15px;font:normal 14px/14px 'Liberation Sans',sans-serif;color:#5f8f8c;letter-spacing:0.05px;white-space:nowrap;">Search Site</div>
<div style="left:455px;top:84px;width:1px;height:18px;background:#5f8f8f;"></div>
<div style="left:456px;top:84px;width:1px;height:18px;background:#dfe8e8;"></div>
<svg style="left:465px;top:85px" width="17" height="17" viewBox="0 0 17 17"><path d="M0.5,5.2 L12.8,0.6 L15.5,8.6 L4.8,15.4 L0.8,9.6 L3,7.5 Z" fill="#f4f4f4" stroke="#000" stroke-width="1.1" stroke-linejoin="round"/><path d="M2.5,6 L4,5.5 L5,6 L7,4.8 L8,5 L10,3.5 L11,3.6 L12.5,2" fill="none" stroke="#e02020" stroke-width="1.3"/><path d="M2.5,9.5 L4.5,14 M5.5,8 L6.5,12.5" stroke="#1010e0" stroke-width="1.3"/><path d="M9,6 L13.5,4.5 L14.5,8 L10,10 Z" fill="#f09050"/><path d="M7.5,7 L8.5,12" stroke="#999" stroke-width="1"/></svg>
<div style="left:490px;top:84px;width:1px;height:18px;background:#5f8f8f;"></div>
<div style="left:491px;top:84px;width:1px;height:18px;background:#dfe8e8;"></div>
<svg style="left:500px;top:85px" width="17" height="17" viewBox="0 0 17 17"><path d="M5,0 H11 L16,5 V11 L11,16 H5 L0,11 V5 Z" fill="#dfe8e8" transform="translate(1,1)"/><path d="M5,0 H11 L16,5 V11 L11,16 H5 L0,11 V5 Z" fill="#5f8f8a"/></svg>
<svg style="left:521px;top:92px" width="10" height="5" viewBox="0 0 10 5"><polygon points="0,0 10,0 5.0,5" fill="#dfe8e8"/></svg>
<svg style="left:520px;top:91px" width="10" height="5" viewBox="0 0 10 5"><polygon points="0,0 10,0 5.0,5" fill="#5f8f8c"/></svg>
<svg style="left:540px;top:85px" width="18" height="16" viewBox="0 0 18 16" shape-rendering="crispEdges"><rect x="2" y="0" width="10" height="8" fill="#000"/><rect x="3" y="1" width="8" height="6" fill="#fff"/><rect x="3" y="1" width="8" height="1.5" fill="#2080f0"/><rect x="8" y="4" width="9" height="7" fill="#000"/><rect x="9" y="5" width="7" height="5" fill="#fff"/><rect x="9" y="5" width="7" height="1.5" fill="#f0a030"/><rect x="0" y="7" width="10" height="9" fill="#000"/><rect x="1" y="8" width="8" height="7" fill="#fff"/><rect x="1" y="8" width="8" height="1.5" fill="#e02020"/></svg>
<div style="left:557px;top:86.15px;font:normal 14px/14px 'Liberation Sans',sans-serif;color:#000;letter-spacing:0.1px;white-space:nowrap;">7592 b</div>
<div style="left:598px;top:86px;width:6px;height:14px;background:#bbc4cc"></div>
<svg style="left:605px;top:87px" width="9" height="6" viewBox="0 0 9 6"><path d="M0.5,0.5 L3,2.75 L0.5,5 M4.5,0.5 L7,2.75 L4.5,5" fill="none" stroke="#000" stroke-width="1.4"/></svg>
<div style="left:615px;top:84px;width:1px;height:20px;background:#5f8f8f;"></div>
<div style="left:616px;top:84px;width:1px;height:20px;background:#dfe8e8;"></div>
<div style="left:621px;top:86.15px;font:normal 14px/14px 'Liberation Sans',sans-serif;color:#000;letter-spacing:0.6px;white-space:nowrap;">Norton AntiVirus</div>
<svg style="left:739px;top:85px" width="16" height="16" viewBox="0 0 16 16" shape-rendering="crispEdges"><rect x="1" y="0" width="13" height="14" fill="#7070b0"/><rect x="3" y="1" width="9" height="7" fill="#f8e040"/><rect x="9" y="9" width="5" height="5" fill="#a0a0d0"/><rect x="0" y="8" width="9" height="7" fill="#2090e0"/><rect x="1" y="9" width="7" height="5" fill="#fff"/><rect x="1" y="11" width="3" height="1" fill="#e02020"/><rect x="4" y="10" width="1" height="3" fill="#e02020"/><rect x="5" y="12" width="3" height="1" fill="#e02020"/></svg>
<svg style="left:763px;top:91px" width="10" height="5" viewBox="0 0 10 5"><polygon points="0,0 10,0 5.0,5" fill="#000"/></svg>
</body></html>
